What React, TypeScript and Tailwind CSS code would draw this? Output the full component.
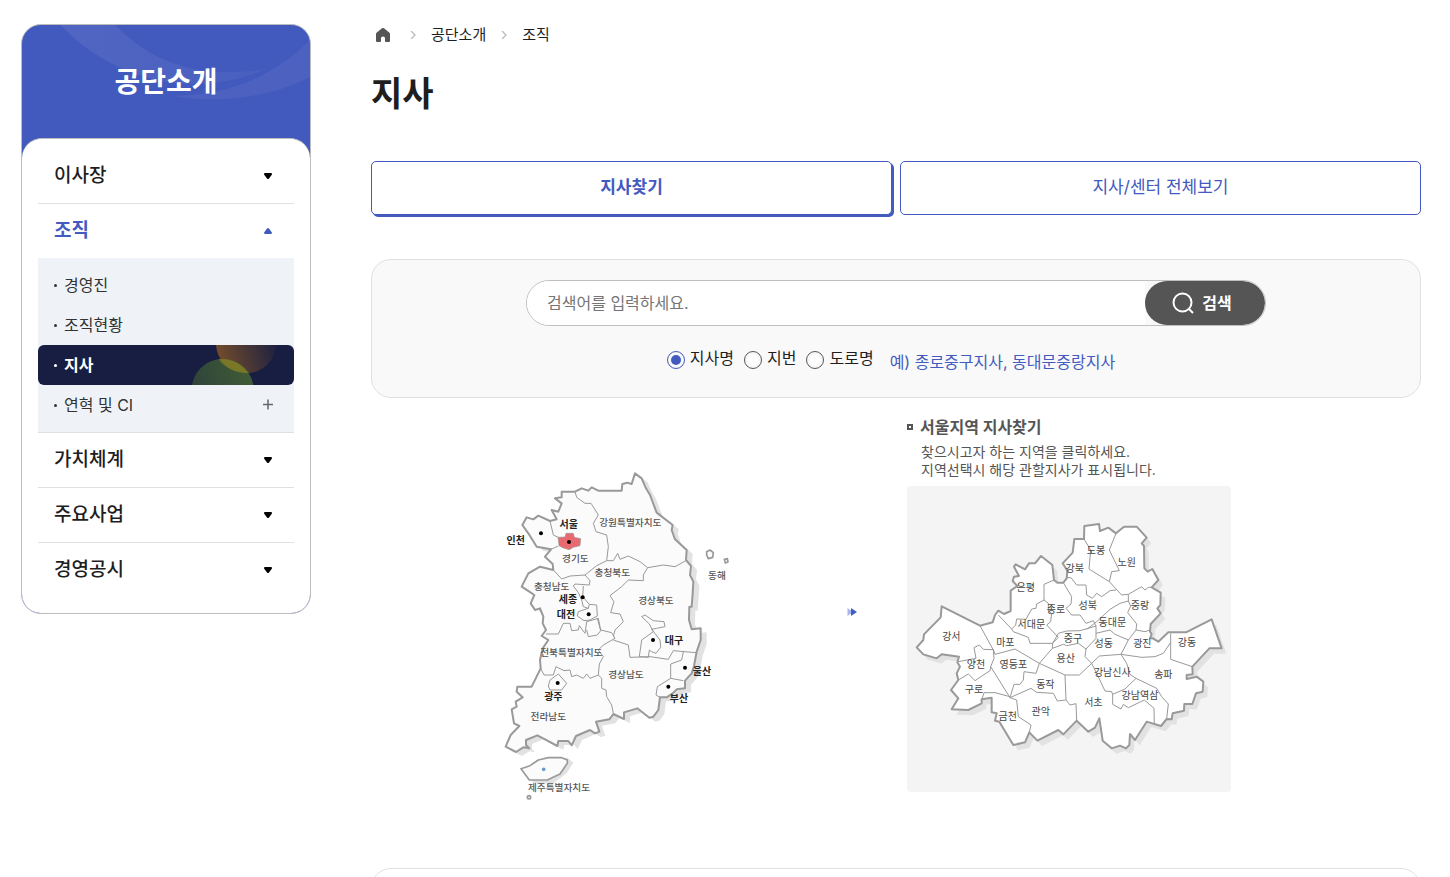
import { Fragment, useState } from "react";

interface MapLabel {
  name: string;
  x: number;
  y: number;
  bold?: boolean;
}

const MAINLAND =
  "M435 40L455 55L468 85L480 105L500 158L548 195L545 210L555 238L590 270L588 300L603 318L600 345L610 365L608 400L605 440L598 440L597 480L605 508L632 505L632 540L620 575L612 618L605 640L585 662L585 685L560 688L548 700L530 712L510 712L505 750L490 770L478 773L442 745L402 757L402 777L370 762L358 778L318 785L328 815L315 820L300 810L258 828L245 856L235 843L205 843L202 858L165 838L142 826L108 840L108 855L118 865L100 862L78 876L47 860L62 825L88 798L72 790L65 748L80 740L77 725L98 712L80 695L82 680L125 680L152 625L150 600L158 565L175 540L155 528L168 510L158 490L160 470L150 445L135 450L122 430L133 405L118 395L95 380L115 340L150 320L190 330L188 312L165 290L183 268L140 260L115 220L97 195L110 172L130 178L145 167L180 183L200 178L185 150L205 155L215 130L195 115L215 112L215 95L255 95L275 85L295 92L305 82L325 92L395 92L397 72L412 68L425 72Z";

const PROVINCE_BORDERS = [
  "M180 183L190 225L205 232M183 268L205 258",
  "M255 95L260 112L285 130L303 130L325 165L310 190L318 215L350 225L355 260L350 302",
  "M190 330L215 357L240 348L285 345L320 317L350 302L370 302L383 280L390 298L415 288L450 305L473 323L520 315L555 320L588 302",
  "M285 345L300 362L298 375L255 372L250 378L265 398L275 420L280 440L295 445L298 433L278 410L280 378",
  "M298 433L320 435L322 468L300 480L282 482L262 468L265 455L295 445",
  "M473 323L460 345L460 362L415 360L395 380L360 407L372 425L362 458L390 462L400 485L375 510L370 530",
  "M168 522L205 522L220 490L240 490L245 512L265 510L268 497L285 520L290 485L325 475L332 510L365 518L375 535L340 555L325 570L340 590L328 612L325 645",
  "M322 475L332 512L322 525L295 530L290 510",
  "M370 540L415 555L420 592L480 590L535 598L550 572L618 578",
  "M455 470L465 465L490 482L522 485L525 500L500 505L485 508L510 540L512 562L498 580L485 575L478 570L475 592L448 590L455 540L490 515L478 492Z",
  "M152 625L162 645L190 645L198 620L222 632L240 630L245 650L260 645L280 655L290 642L300 655L325 645",
  "M325 645L335 655L335 685L348 690L350 710L365 735L370 760",
  "M180 660L205 642L230 670L215 690L180 690L175 678Z",
  "M580 575L575 600L542 612L542 655L580 662M542 655L502 680L498 705L510 712",
];

const PROVINCES: MapLabel[] = [
  { name: "서울", x: 236, y: 191, bold: true },
  { name: "인천", x: 77, y: 240, bold: true },
  { name: "강원특별자치도", x: 421, y: 188 },
  { name: "경기도", x: 256, y: 295 },
  { name: "충청북도", x: 367, y: 337 },
  { name: "충청남도", x: 185, y: 380 },
  { name: "세종", x: 234, y: 416, bold: true },
  { name: "대전", x: 228, y: 463, bold: true },
  { name: "경상북도", x: 498, y: 422 },
  { name: "대구", x: 552, y: 539, bold: true },
  { name: "전북특별자치도", x: 244, y: 576 },
  { name: "경상남도", x: 408, y: 642 },
  { name: "울산", x: 636, y: 634, bold: true },
  { name: "부산", x: 567, y: 715, bold: true },
  { name: "광주", x: 190, y: 707, bold: true },
  { name: "전라남도", x: 175, y: 770 },
  { name: "제주특별자치도", x: 207, y: 982 },
  { name: "동해", x: 681, y: 345 },
];

const CITY_DOTS = [
  [153, 220],
  [237, 246],
  [278, 412],
  [296, 463],
  [489, 540],
  [585, 623],
  [535, 680],
  [203, 669],
];

const SEOUL =
  "M125 319L240 377L278 367L285 345L295 332L312 342L332 333L332 272L352 258L338 243L342 230L357 228L342 200L347 193L375 208L387 190L405 190L423 168L457 195L462 240L472 248L490 248L500 235L502 212L488 190L518 158L523 117L552 117L553 78L597 72L600 93L625 83L648 100L672 80L710 80L740 113L725 130L732 138L733 205L743 215L757 207L775 240L755 262L782 278L781 315L772 325L782 340L752 372L750 395L755 402L750 415L758 415L775 425L805 397L858 397L935 358L965 445L928 445L877 500L878 523L860 525L860 537L890 530L910 545L908 575L888 580L877 612L853 612L852 632L818 640L815 658L800 657L783 678L740 665L705 720L690 702L688 735L678 745L660 737L635 745L608 722L598 655L585 683L565 695L530 662L490 703L475 690L412 722L388 697L375 727L340 735L298 665L285 662L290 640L275 637L275 593L245 598L245 610L205 630L155 628L175 595L153 570L175 540L170 520L180 500L172 487L177 470L125 463L110 475L70 463L50 442L70 420L72 403L122 352Z";

const DISTRICT_BORDERS = [
  "M240 377L280 450M175 485L228 475L222 443L238 435L250 448L280 449",
  "M280 449L285 463L345 447L418 490M280 449L282 475L272 500L330 593",
  "M272 500L270 512L225 542L205 522L175 540",
  "M245 600L252 578L285 578L330 590",
  "M330 593L350 600L355 650L393 675L388 697",
  "M330 593L393 565L410 577L460 580L472 603L497 600",
  "M330 593L342 553L360 553L370 540L372 515L408 520L418 490",
  "M418 490L495 525L538 525L575 490M418 490L457 445L458 430M457 445L490 433L500 437L535 430L558 447L555 470L575 490",
  "M495 525L498 600L510 615L528 611L530 662",
  "M575 490L590 520L615 573L635 575L638 583L638 613L663 627L670 613L685 623L733 600L762 625L763 672",
  "M638 583L675 567L708 535",
  "M663 463L680 490L690 523L708 535L770 565L785 590L805 612L800 657",
  "M575 490L598 468L663 463L725 472L765 470L790 460L812 427L812 400",
  "M812 427L812 478L877 500",
  "M663 463L685 420L708 390L710 372M588 400L630 390L645 403L685 420M708 390L735 395L750 390",
  "M588 378L588 415L558 447M458 430L475 400L500 393L540 392L588 378",
  "M462 240L432 253L432 300L410 312L408 325L395 327L378 358L350 357L347 375L335 387L295 345",
  "M335 387L340 395L385 412L390 430L458 430",
  "M432 300L445 310L445 333L455 340L452 365L440 375L475 412L458 430",
  "M490 248L515 290L513 312L498 325L515 345L540 345L558 370L580 362L588 378",
  "M500 233L513 233L530 255L558 255L560 285L577 295L590 280L605 290L630 272L648 270",
  "M552 117L572 150L567 207L628 245L665 285L685 283L725 260L735 270L745 262L755 262",
  "M648 100L628 150L658 212L635 215L628 245",
  "M685 283L685 303L660 310L630 328L590 365L560 388",
  "M685 303L692 318L683 338L710 372",
];

const DISTRICTS: MapLabel[] = [
  { name: "도봉", x: 588, y: 149 },
  { name: "노원", x: 680, y: 185 },
  { name: "강북", x: 524, y: 204 },
  { name: "은평", x: 377, y: 262 },
  { name: "종로", x: 468, y: 326 },
  { name: "성북", x: 563, y: 316 },
  { name: "중랑", x: 720, y: 316 },
  { name: "서대문", x: 394, y: 372 },
  { name: "동대문", x: 637, y: 365 },
  { name: "강서", x: 154, y: 407 },
  { name: "마포", x: 316, y: 426 },
  { name: "중구", x: 519, y: 413 },
  { name: "성동", x: 611, y: 430 },
  { name: "광진", x: 727, y: 430 },
  { name: "강동", x: 861, y: 426 },
  { name: "양천", x: 228, y: 492 },
  { name: "영등포", x: 340, y: 493 },
  { name: "용산", x: 497, y: 475 },
  { name: "강남신사", x: 637, y: 517 },
  { name: "송파", x: 790, y: 523 },
  { name: "구로", x: 222, y: 566 },
  { name: "동작", x: 436, y: 552 },
  { name: "강남역삼", x: 720, y: 585 },
  { name: "서초", x: 580, y: 607 },
  { name: "금천", x: 323, y: 648 },
  { name: "관악", x: 422, y: 632 },
];

function Caret({ up = false }: { up?: boolean }) {
  return (
    <svg className="h-2 w-3" viewBox="0 0 12 8" fill="currentColor" aria-hidden="true">
      {up ? (
        <path d="M6 1Q6.500 1 7 1.600L9.700 5.200Q10.400 7 9 7H3Q1.600 7 2.300 5.200L5 1.600Q5.500 1 6 1Z" />
      ) : (
        <path d="M3 1H9Q10.600 1 9.800 2.800L7 6.400Q6 7.400 5 6.400L2.200 2.800Q1.400 1 3 1Z" />
      )}
    </svg>
  );
}

function MenuRow({ label, open = false }: { label: string; open?: boolean }) {
  return (
    <button
      type="button"
      aria-expanded={open}
      className={
        open
          ? "flex h-[54px] w-full items-center justify-between px-4 pr-5 text-[19px] font-bold text-[#435abf]"
          : "flex h-[54px] w-full items-center justify-between px-4 pr-5 text-[19px] font-medium text-[#1e1e1e]"
      }
    >
      {label}
      <span className={open ? "text-[#435abf]" : "text-black"}>
        <Caret up={open} />
      </span>
    </button>
  );
}

function SubLink({ label, active = false, more = false }: { label: string; active?: boolean; more?: boolean }) {
  return (
    <li>
      <a
        href="#"
        aria-current={active ? "page" : undefined}
        className={
          active
            ? "relative flex h-10 items-center overflow-hidden rounded-md bg-[#181e42] px-4 font-bold text-white"
            : "relative flex h-10 items-center px-4 text-[#333]"
        }
      >
        {active && (
          <svg className="absolute inset-y-0 right-0 h-10 w-64" viewBox="0 0 768 120" aria-hidden="true">
            <defs>
              <linearGradient id="orange" x1="0" x2="1" y1="0.600" y2="0.300">
                <stop offset="0" stopColor="#b06a1c" stopOpacity="0.600" />
                <stop offset="1" stopColor="#b06a1c" stopOpacity="0" />
              </linearGradient>
              <linearGradient id="green" x1="0" x2="1" y1="0.300" y2="0">
                <stop offset="0" stopColor="#5c8a2c" stopOpacity="0.350" />
                <stop offset="1" stopColor="#5c8a2c" stopOpacity="0.600" />
              </linearGradient>
            </defs>
            <circle cx="624" cy="-5" r="90" fill="url(#orange)" />
            <circle cx="554" cy="135" r="93" fill="url(#green)" />
            <path d="M541 42Q596 38 632 84Q569 82 541 42Z" fill="#8c8224" fillOpacity="0.600" />
          </svg>
        )}
        <span className="mr-[7px] h-[3px] w-[3px] rounded-full bg-current" />
        {label}
        {more && (
          <svg className="ml-auto mr-1 h-3 w-3" viewBox="0 0 12 12" stroke="#666" strokeWidth="1.500" aria-hidden="true">
            <path d="M1 5.500H11M6 0.500V10.500" />
          </svg>
        )}
      </a>
    </li>
  );
}

function Sidebar() {
  return (
    <nav
      aria-label="공단소개"
      className="w-[290px] shrink-0 overflow-hidden rounded-[20px] border border-[#bcbcbc] bg-[#4259bd]"
    >
      <div className="relative flex h-[113px] items-center justify-center">
        <svg className="absolute inset-0 h-full w-full" viewBox="36 45 864 339" aria-hidden="true">
          <defs>
            <linearGradient id="swoosh" x1="0" x2="1">
              <stop offset="0" stopColor="#fff" stopOpacity="0.080" />
              <stop offset="1" stopColor="#fff" stopOpacity="0.040" />
            </linearGradient>
          </defs>
          <path d="M152 45C250 150 400 225 560 222C640 220 720 200 765 177C600 205 440 175 315 45Z" fill="url(#swoosh)" />
          <path d="M500 257C640 255 780 210 900 90V200C790 260 640 280 500 260Z" fill="#fff" fillOpacity="0.060" />
        </svg>
        <h2 className="relative text-[28px] font-bold text-white">공단소개</h2>
      </div>
      <div className="rounded-t-[20px] border-t border-[#bcbcbc] bg-white px-4 pb-4 pt-[10px]">
        <MenuRow label="이사장" />
        <div className="border-t border-[#e0e0e0]">
          <MenuRow label="조직" open />
          <ul className="bg-[#eff3f8] py-[7px] text-base">
            <SubLink label="경영진" />
            <SubLink label="조직현황" />
            <SubLink label="지사" active />
            <SubLink label="연혁 및 CI" more />
          </ul>
        </div>
        {["가치체계", "주요사업", "경영공시"].map((label) => (
          <div key={label} className="border-t border-[#e0e0e0]">
            <MenuRow label={label} />
          </div>
        ))}
      </div>
    </nav>
  );
}

function Breadcrumb() {
  return (
    <nav aria-label="현재 위치" className="flex h-[22px] items-center text-[15px] text-[#1e1e1e]">
      <a href="#" aria-label="홈" className="ml-1">
        <svg className="h-4 w-4" viewBox="0 0 16 16" fill="#555">
          <path d="M7 1.300Q8 0.500 9 1.300L14.200 5.500Q15 6.200 15 7V14Q15 15 14 15H11Q10 15 10 14V11Q10 9.500 8 9.500Q6 9.500 6 11V14Q6 15 5 15H2Q1 15 1 14V7Q1 6.200 1.800 5.500Z" />
        </svg>
      </a>
      {["공단소개", "조직"].map((label, i) => (
        <Fragment key={label}>
          <svg
            className={i === 0 ? "ml-[18px] mr-[14px] h-2 w-2" : "mx-[14px] h-2 w-2"}
            viewBox="0 0 8 8"
            fill="none"
            stroke="#bbb"
            strokeWidth="1.300"
            aria-hidden="true"
          >
            <path d="M2 0L6 4L2 8" />
          </svg>
          <a href="#">{label}</a>
        </Fragment>
      ))}
    </nav>
  );
}

function SearchBox() {
  const [kind, setKind] = useState("지사명");

  return (
    <form
      className="mt-11 rounded-[20px] border border-[#e0e0e0] bg-[#f9f9f9] px-5 pb-[23px] pt-5"
      onSubmit={(e) => e.preventDefault()}
    >
      <div className="mx-auto flex h-[46px] max-w-[740px] overflow-hidden rounded-full border border-[#bfbfbf]">
        <input
          type="text"
          aria-label="검색어"
          placeholder="검색어를 입력하세요."
          className="min-w-0 flex-1 bg-white px-5 text-base outline-none placeholder:text-[#757575]"
        />
        <button
          type="submit"
          className="flex w-[120px] items-center justify-center gap-2 rounded-full bg-[#555] pr-[6px] text-base font-bold text-white"
        >
          <svg className="h-[22px] w-[22px]" viewBox="0 0 22 22" fill="none" stroke="currentColor" strokeWidth="2" aria-hidden="true">
            <circle cx="10.500" cy="10.500" r="9" />
            <path d="M17 17L21 21" />
          </svg>
          검색
        </button>
      </div>
      <div className="mt-5 flex items-start justify-center pr-[10px]">
        <div className="flex gap-[10px]">
          {["지사명", "지번", "도로명"].map((label) => (
            <label key={label} className="flex items-start gap-[5px] text-base text-[#1e1e1e]">
              <input
                type="radio"
                name="kind"
                checked={kind === label}
                onChange={() => setKind(label)}
                className="mt-[5px] h-[18px] w-[18px] appearance-none rounded-full border border-[#555] bg-white bg-clip-content p-[3px] checked:border-[#435abf] checked:bg-[#435abf]"
              />
              {label}
            </label>
          ))}
        </div>
        <p className="ml-4 mt-1 text-base text-[#435abf]">예) 종로중구지사, 동대문중랑지사</p>
      </div>
    </form>
  );
}

function KoreaMap() {
  return (
    <svg
      className="mt-[62px] h-[350px] w-[260px] shrink-0"
      viewBox="0 0 780 1050"
      role="img"
      aria-label="전국 지도"
      strokeLinejoin="round"
    >
      <g fill="#e2e2e2">
        <path d={MAINLAND} transform="translate(18 12)" />
        <path d="M110 926L135 905L165 893H232L250 908L230 940L190 970H130Z" />
      </g>
      <path d={MAINLAND} fill="#fbfbfb" stroke="#999" strokeWidth="6" />
      <g fill="#fbfbfb" stroke="#999" strokeWidth="5">
        <path d="M93 926L120 917L145 900L175 893H215L232 900V910L210 942L172 960H118Z" />
        <path d="M650 275L660 270L670 278L668 292L655 296L650 285Z" />
        <path d="M703 298L712 296L714 306L706 309Z" />
        <circle cx="117" cy="1012" r="5" />
      </g>
      <g fill="none" stroke="#999" strokeWidth="3">
        {PROVINCE_BORDERS.map((d) => (
          <path key={d} d={d} />
        ))}
      </g>
      <path d="M204 232L225 231L228 220H250L253 232L272 236L270 257L250 262L238 269L220 264L207 257Z" fill="#e86a70" stroke="#999" strokeWidth="2" />
      {CITY_DOTS.map(([x, y]) => (
        <circle key={x} cx={x} cy={y} r="6" fill="#000" />
      ))}
      <circle cx="161" cy="928" r="5.500" fill="#6699cc" />
      {PROVINCES.map((p) => (
        <text
          key={p.name}
          x={p.x}
          y={p.y}
          textAnchor="middle"
          dominantBaseline="central"
          className={p.bold ? "fill-[#222] text-[30px] font-bold" : "fill-[#555] text-[29px] font-medium"}
        >
          {p.name}
        </text>
      ))}
    </svg>
  );
}

function SeoulMap() {
  return (
    <svg
      className="mt-[7px] h-[306px] w-[324px] rounded bg-[#f4f4f4]"
      viewBox="21 -42 972 918"
      role="img"
      aria-label="서울 지도"
      strokeLinejoin="round"
    >
      <path d={SEOUL} fill="#e2e2e2" transform="translate(14 16)" />
      <path d={SEOUL} fill="#fff" stroke="#999" strokeWidth="6" />
      <g fill="none" stroke="#999" strokeWidth="3">
        {DISTRICT_BORDERS.map((d) => (
          <path key={d} d={d} />
        ))}
      </g>
      {DISTRICTS.map((p) => (
        <text
          key={p.name}
          x={p.x}
          y={p.y}
          textAnchor="middle"
          dominantBaseline="central"
          className="fill-[#444] text-[30px]"
        >
          {p.name}
        </text>
      ))}
    </svg>
  );
}

export default function App() {
  return (
    <div className="flex items-start gap-[60px] bg-white pl-[21px] pr-[29px] pt-6 font-[Inter,'Noto_Sans_CJK_KR',sans-serif]">
      <Sidebar />
      <main className="min-w-0 flex-1">
        <Breadcrumb />
        <h1 className="mt-[26px] text-[34px] font-bold leading-[44px] text-[#1e1e1e]">지사</h1>

        <div className="mt-[45px] grid grid-cols-2 gap-2 text-[17px] text-[#435abf]">
          <button
            type="button"
            className="h-[54px] rounded-[5px] border border-[#435abf] bg-white font-bold shadow-[2px_2px_0_#435abf]"
          >
            지사찾기
          </button>
          <button type="button" className="h-[54px] rounded-[5px] border border-[#435abf] bg-white">
            지사/센터 전체보기
          </button>
        </div>

        <SearchBox />

        <section className="flex items-start justify-center pr-[71px]">
          <KoreaMap />
          <svg className="ml-[97px] mt-[209px] h-[10px] w-[10px] shrink-0" viewBox="0 0 10 10" aria-hidden="true">
            <path d="M0.500 1L6 5L0.500 9Z" fill="#a9b6ea" />
            <path d="M4 1L10 5L4 9Z" fill="#3f5fc4" />
          </svg>
          <div className="ml-[50px] pt-[17px] text-[#555]">
            <h3 className="flex items-center gap-[7px] text-base font-bold leading-6">
              <span className="h-[6px] w-[6px] border-2 border-[#555]" />
              서울지역 지사찾기
            </h3>
            <p className="ml-[14px] mt-1 text-sm leading-[18px]">
              찾으시고자 하는 지역을 클릭하세요.
              <br />
              지역선택시 해당 관할지사가 표시됩니다.
            </p>
            <SeoulMap />
          </div>
        </section>

        <section className="mt-[58px] h-32 rounded-[20px] border border-[#e0e0e0] bg-white" />
      </main>
    </div>
  );
}
